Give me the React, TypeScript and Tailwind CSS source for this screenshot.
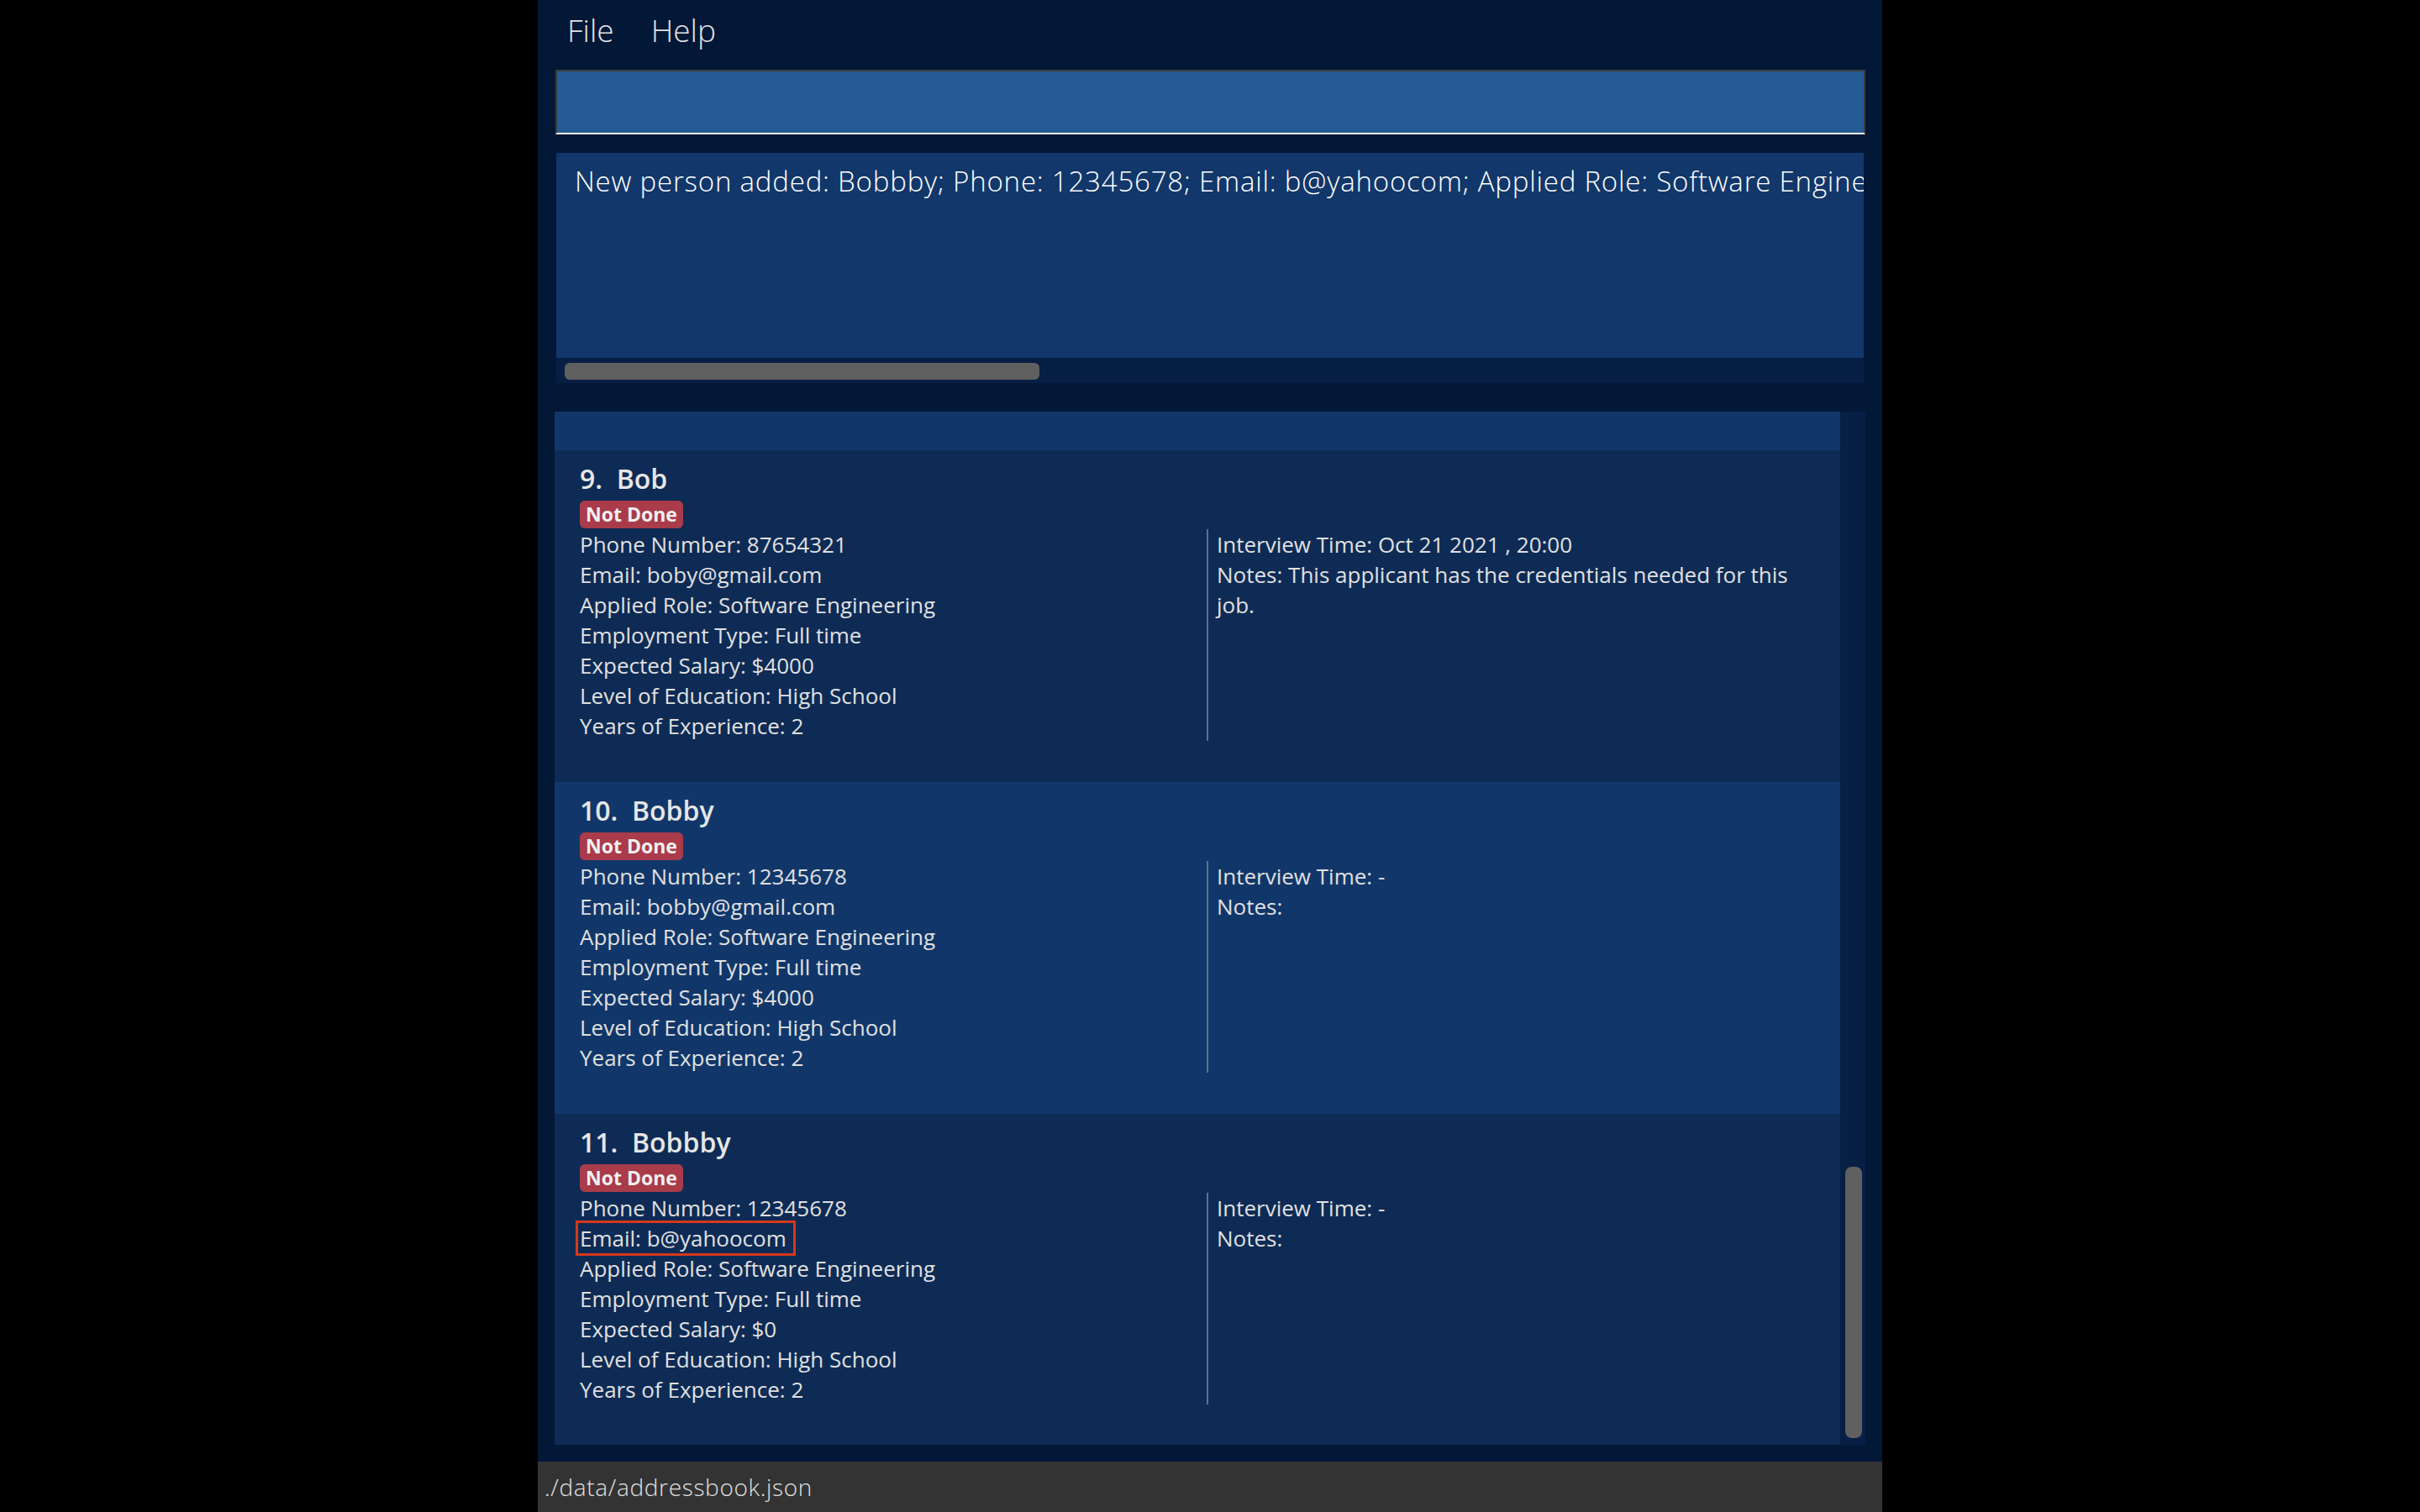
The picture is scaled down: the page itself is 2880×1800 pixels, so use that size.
type Applicant = {
  index: number;
  name: string;
  phone: string;
  email: string;
  salary: string;
  interview: string;
  notes: string;
  flagEmail?: boolean;
};

const applicants: Applicant[] = [
  {
    index: 9,
    name: "Bob",
    phone: "87654321",
    email: "boby@gmail.com",
    salary: "$4000",
    interview: "Oct 21 2021 , 20:00",
    notes: "This applicant has the credentials needed for this job.",
  },
  {
    index: 10,
    name: "Bobby",
    phone: "12345678",
    email: "bobby@gmail.com",
    salary: "$4000",
    interview: "-",
    notes: "",
  },
  {
    index: 11,
    name: "Bobbby",
    phone: "12345678",
    email: "b@yahoocom",
    salary: "$0",
    interview: "-",
    notes: "",
    flagEmail: true,
  },
];

const resultText =
  "New person added: Bobbby; Phone: 12345678; Email: b@yahoocom; Applied Role: Software Engineering; Employment Type: Full time; Expected Salary: 0; Level of Education: High School; Years of Experience: 2";

function ApplicantCard({ a, light, height }: { a: Applicant; light: boolean; height: string }) {
  return (
    <div className={`${height} ${light ? "bg-[#11376a]" : "bg-[#0e2b55]"} shrink-0 px-[30px] pt-[12px]`}>
      <div className="text-[32px] font-semibold leading-[44px] text-[#e6e6e6] whitespace-pre">
        {a.index}.{"  "}
        {a.name}
      </div>
      <div className="mt-[4px] flex">
        <span className="h-[33px] rounded-[6px] bg-[#a93b4b] px-[7px] text-[23px] font-bold leading-[33px] text-[#f0f0f0]">
          Not Done
        </span>
      </div>
      <div className="mt-[1px] flex text-[26px] leading-[36px] text-[#e0e0e0]">
        <div className="w-[746px] shrink-0">
          <div>Phone Number: {a.phone}</div>
          <div>
            {a.flagEmail ? (
              <span className="inline-block w-[256px] -ml-[2px] pl-[2px] outline-[3px] outline-[#d6391c]">
                Email: {a.email}
              </span>
            ) : (
              <>Email: {a.email}</>
            )}
          </div>
          <div>Applied Role: Software Engineering</div>
          <div>Employment Type: Full time</div>
          <div>Expected Salary: {a.salary}</div>
          <div>Level of Education: High School</div>
          <div>Years of Experience: 2</div>
        </div>
        <div className="flex-1 border-l-2 border-[#5d7290] pl-[10px]">
          <div>Interview Time: {a.interview}</div>
          <div>Notes: {a.notes}</div>
        </div>
      </div>
    </div>
  );
}

export default function App() {
  return (
    <div className="flex min-h-screen w-full justify-center bg-black">
      <div className="flex h-[1800px] w-[1600px] flex-col bg-[#031737] font-['Open_Sans',sans-serif]">
        {/* menu bar */}
        <div className="flex h-[72px] items-center gap-[44px] pl-[35px] text-[37px] font-light text-[#e4e4e4]">
          <span>File</span>
          <span>Help</span>
        </div>

        {/* command box */}
        <div className="px-[20px] pt-[11px]">
          <div className="ml-[1px] h-[77px] border-2 border-[#3c3c3c] border-b-white bg-[#245b94]" />
        </div>

        {/* result display */}
        <div className="mx-[22px] mt-[22px]">
          <div className="h-[244px] overflow-hidden bg-[#12376a] pl-[22px] pt-[12px]">
            <div className="whitespace-nowrap text-[33px] font-light leading-[44px] tracking-[0.8px] text-white">
              {resultText}
            </div>
          </div>
          <div className="h-[30px] bg-[#071f45] pl-[10px] pt-[6px]">
            <div className="h-[20px] w-[565px] rounded-[6px] bg-[#606060]" />
          </div>
        </div>

        {/* person list */}
        <div className="mx-[20px] mt-[34px] flex h-[1230px]">
          <div className="flex flex-1 flex-col overflow-hidden">
            <div className="h-[46px] shrink-0 bg-[#11376a]" />
            {applicants.map((a, i) => (
              <ApplicantCard
                key={a.index}
                a={a}
                light={i % 2 === 1}
                height={i === applicants.length - 1 ? "h-[394px]" : "h-[395px]"}
              />
            ))}
          </div>
          <div className="flex w-[30px] flex-col justify-end bg-[#071f45] pb-[8px] pl-[6px]">
            <div className="h-[323px] w-[20px] rounded-[8px] bg-[#606060]" />
          </div>
        </div>

        {/* status bar */}
        <div className="mt-[20px] flex h-[60px] items-center bg-[#333333] pl-[8px] text-[28px] font-light tracking-[0.65px] text-[#e0e0e0]">
          ./data/addressbook.json
        </div>
      </div>
    </div>
  );
}
